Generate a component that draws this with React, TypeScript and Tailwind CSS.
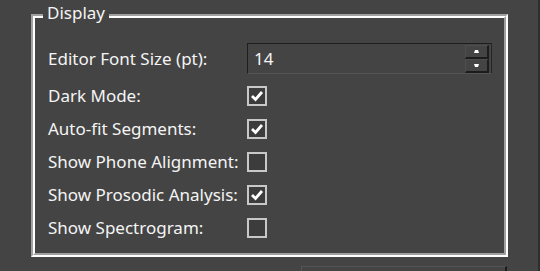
import React from 'react';

const font = { fontFamily: '"Noto Sans", "Open Sans", sans-serif' };

function CheckBox({ checked }: { checked: boolean }) {
	return (
		<div className="w-[20px] h-[20px] border-2 border-[#c8c8c8] bg-[#3c3c3c] flex items-center justify-center">
			{checked && (
				<svg width="16" height="16" viewBox="0 0 16 16">
					<path d="M3 8 L6.5 11.5 L13 4" fill="none" stroke="#ffffff" strokeWidth="2.8" />
				</svg>
			)}
		</div>
	);
}

function SpinBox({ value }: { value: string }) {
	return (
		<div className="h-[31px] w-[245px] border-t border-l border-[#1e1e1e] border-r border-b border-r-[#262626] border-b-[#555555] flex items-center justify-between pl-[6px] pr-[2px]">
			<span className="text-[17px] text-[#f4f4f4] leading-none">{value}</span>
			<div className="flex flex-col">
				<button className="w-[24px] h-[14px] border-t border-l border-[#4e4e4e] border-r-2 border-b-2 border-r-[#1c1c1c] border-b-[#1c1c1c] flex items-center justify-center">
					<svg width="5" height="3" viewBox="0 0 5 3"><path d="M1 0 H4 L5 3 H0 Z" fill="#fff" /></svg>
				</button>
				<button className="w-[24px] h-[14px] border-t border-l border-[#4e4e4e] border-r-2 border-b-2 border-r-[#1c1c1c] border-b-[#1c1c1c] flex items-center justify-center">
					<svg width="5" height="3" viewBox="0 0 5 3"><path d="M0 0 H5 L4 3 H1 Z" fill="#fff" /></svg>
				</button>
			</div>
		</div>
	);
}

const rows = [
	{ label: 'Dark Mode:', checked: true },
	{ label: 'Auto-fit Segments:', checked: true },
	{ label: 'Show Phone Alignment:', checked: false },
	{ label: 'Show Prosodic Analysis:', checked: true },
	{ label: 'Show Spectrogram:', checked: false },
];

export default function App() {
	return (
		<div className="w-[540px] h-[271px] bg-[#444444] overflow-hidden flex" style={font}>
			<div className="w-[538px]">
				<div className="relative ml-[31px] mt-[14px] w-[477px] h-[243px] border-t-2 border-l-2 border-[#a0a0a0] border-r-2 border-b-2 border-r-white border-b-white">
					<span className="absolute left-[10px] top-[-14px] px-[4px] bg-[#444444] text-[17px] leading-[22px] text-[#f4f4f4]">
						Display
					</span>
					<div className="h-full border-t-2 border-l-2 border-white border-r-2 border-b-2 border-r-[#a0a0a0] border-b-[#a0a0a0] pl-[13px] pt-[25px]">
						<div className="flex items-center h-[31px]">
							<div className="w-[199px] text-[17px] text-[#f4f4f4]">Editor Font Size (pt):</div>
							<SpinBox value="14" />
						</div>
						<div className="mt-[5px]">
							{rows.map((r) => (
								<div key={r.label} className="flex items-center h-[33px]">
									<div className="w-[199px] text-[17px] text-[#f4f4f4]">{r.label}</div>
									<CheckBox checked={r.checked} />
								</div>
							))}
						</div>
					</div>
				</div>
				<div className="ml-[301px] mt-[9px] w-[206px] h-[12px] border-t border-l border-[#555555] border-r-2 border-r-[#1c1c1c]" />
			</div>
			<div className="w-[2px] h-full bg-[#2e2e2e]" />
		</div>
	);
}
